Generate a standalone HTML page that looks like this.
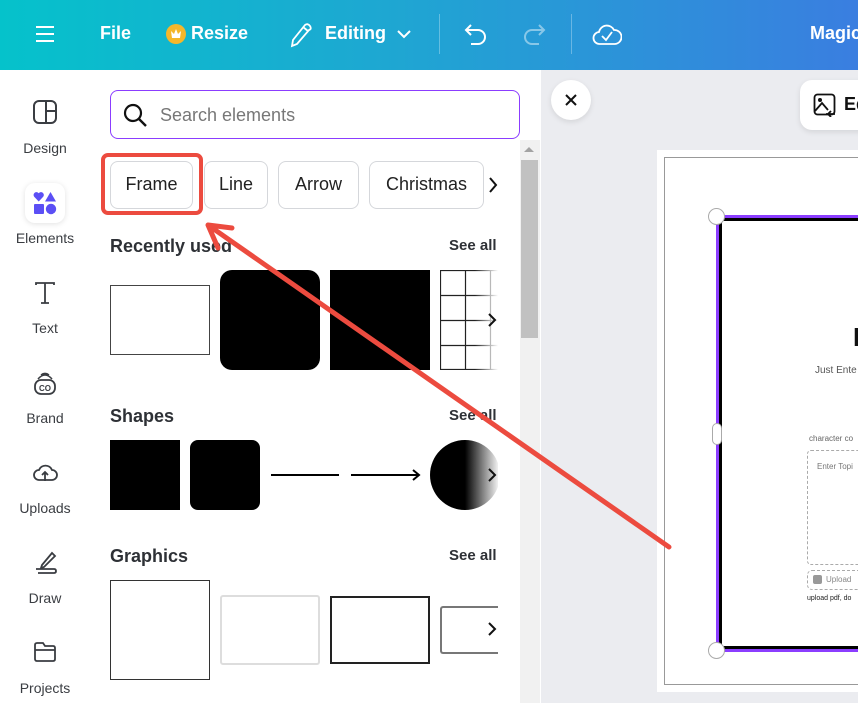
<!DOCTYPE html>
<html><head><meta charset="utf-8"><style>
*{box-sizing:border-box;margin:0;padding:0}
body{width:858px;height:703px;overflow:hidden;font-family:"Liberation Sans",sans-serif;background:#fff;position:relative}
.top{position:absolute;left:0;top:0;width:858px;height:70px;background:linear-gradient(90deg,#05c2cb 0%,#1ea7d2 45%,#3a7ee0 100%);color:#fff}
.top .t{position:absolute;top:23px;font-size:18px;font-weight:bold}
.side{position:absolute;left:0;top:0;width:90px;height:703px}
.lb{position:absolute;left:0;width:90px;text-align:center;font-size:14px;color:#3a3d42}
.ic{position:absolute;left:32px}
.search{position:absolute;left:110px;top:90px;width:410px;height:49px;border:1px solid #8b3dff;border-radius:8px}
.chip{position:absolute;top:161px;height:48px;border:1px solid #d5d7db;border-radius:8px;font-size:18px;color:#222;text-align:center;line-height:46px}
.h{position:absolute;left:110px;font-size:18px;font-weight:bold;color:#2e3136}
.sa{position:absolute;left:449px;font-size:15px;font-weight:bold;color:#2e3136}
.abs{position:absolute}
.canvas{position:absolute;left:541px;top:70px;width:317px;height:633px;background:#ebecf0}
</style></head><body>
<div class="top">
<svg class="abs" style="left:35px;top:24px" width="20" height="20"><path d="M1 3h18M1 10h18M1 17h18" stroke="#fff" stroke-width="2"/></svg>
<div class="t" style="left:100px">File</div>
<div class="abs" style="left:166px;top:24px;width:20px;height:20px;border-radius:50%;background:#f5b72a"></div>
<svg class="abs" style="left:170px;top:28px" width="12" height="11"><path d="M1 3l3 3 2-5 2 5 3-3-1 7H2z" fill="#fff"/></svg>
<div class="t" style="left:191px">Resize</div>
<svg class="abs" style="left:288px;top:22px" width="24" height="26"><path d="M4 24l1-6L17 3q3-2 5 1t-1 4L9 22z M15 5l5 4" fill="none" stroke="#fff" stroke-width="1.8"/></svg>
<div class="t" style="left:325px">Editing</div>
<svg class="abs" style="left:396px;top:29px" width="16" height="10"><path d="M2 2l6 6 6-6" fill="none" stroke="#fff" stroke-width="2"/></svg>
<div class="abs" style="left:439px;top:14px;width:1px;height:40px;background:rgba(255,255,255,.3)"></div>
<svg class="abs" style="left:463px;top:22px" width="26" height="24"><path d="M8 3L3 8l5 5M3 8h12a7 7 0 0 1 0 14H8" fill="none" stroke="#fff" stroke-width="2"/></svg>
<svg class="abs" style="left:521px;top:22px" width="26" height="24"><path d="M18 3l5 5-5 5M23 8H11a7 7 0 0 0 0 14h7" fill="none" stroke="rgba(255,255,255,.45)" stroke-width="2"/></svg>
<div class="abs" style="left:571px;top:14px;width:1px;height:40px;background:rgba(255,255,255,.3)"></div>
<svg class="abs" style="left:592px;top:20px" width="30" height="28"><path d="M8 24a6 6 0 0 1-1-12 8 8 0 0 1 15-2 7 7 0 0 1 1 14z M10 16l4 4 6-8" fill="none" stroke="#fff" stroke-width="1.8"/></svg>
<div class="t" style="left:810px">Magic</div>
</div>
<div class="side">
<svg class="ic" style="top:99px" width="26" height="26"><rect x="2" y="2" width="22" height="22" rx="5" fill="none" stroke="#3a3d42" stroke-width="2"/><path d="M14 2v22M14 12h10" stroke="#3a3d42" stroke-width="2"/></svg>
<div class="lb" style="top:140px">Design</div>
<div class="abs" style="left:25px;top:183px;width:40px;height:40px;border-radius:10px;background:#fff;box-shadow:0 1px 6px rgba(0,0,0,.12)"></div>
<svg class="abs" style="left:33px;top:191px" width="24" height="24"><path d="M5.7 10.5 L1.2 5.8 A2.8 2.8 0 0 1 5.7 2.2 A2.8 2.8 0 0 1 10.2 5.8z" fill="#5b4ff5"/><path d="M17.5 1l5.5 9.5h-11z" fill="#5b4ff5"/><rect x="1" y="13" width="10" height="10" rx="1" fill="#5b4ff5"/><circle cx="18" cy="18" r="5.2" fill="#5b4ff5"/></svg>
<div class="lb" style="top:230px">Elements</div>
<svg class="ic" style="top:280px" width="26" height="26"><path d="M4 5V3h18v2M13 3v20M9 23h8" fill="none" stroke="#3a3d42" stroke-width="1.8"/></svg>
<div class="lb" style="top:320px">Text</div>
<svg class="ic" style="top:370px" width="26" height="26"><rect x="3" y="10" width="20" height="14" rx="6" fill="none" stroke="#3a3d42" stroke-width="1.8"/><path d="M6 9q7-8 14 0M9 5q4-3 8 0" fill="none" stroke="#3a3d42" stroke-width="1.6"/><text x="13" y="21" font-size="8" font-weight="bold" text-anchor="middle" fill="#3a3d42" font-family="Liberation Sans">CO</text></svg>
<div class="lb" style="top:410px">Brand</div>
<svg class="ic" style="top:459px" width="26" height="26"><path d="M7 21a5 5 0 0 1 0-10 7 7 0 0 1 13 0 5 5 0 0 1 0 10z M13 22v-8M10 16l3-3 3 3" fill="none" stroke="#3a3d42" stroke-width="1.8"/></svg>
<div class="lb" style="top:500px">Uploads</div>
<svg class="ic" style="top:549px" width="26" height="26"><path d="M10 16l10-12 3 3-11 11-3 1z M4 20h18q2 0 2 2t-2 2H6" fill="none" stroke="#3a3d42" stroke-width="1.8"/></svg>
<div class="lb" style="top:590px">Draw</div>
<svg class="ic" style="top:639px" width="26" height="26"><path d="M3 6q0-2 2-2h6l2 3h8q2 0 2 2v11q0 2-2 2H5q-2 0-2-2z M3 11h20" fill="none" stroke="#3a3d42" stroke-width="1.8"/></svg>
<div class="lb" style="top:680px">Projects</div>
</div>
<div class="search"><svg class="abs" style="left:12px;top:12px" width="26" height="26"><circle cx="10" cy="10" r="8" fill="none" stroke="#111" stroke-width="2.2"/><path d="M16 16l7 7" stroke="#111" stroke-width="2.4"/></svg><div class="abs" style="left:49px;top:14px;font-size:18px;color:#777">Search elements</div></div>
<div class="chip" style="left:110px;width:83px;line-height:44px">Frame</div>
<div class="chip" style="left:204px;width:64px;line-height:44px">Line</div>
<div class="chip" style="left:278px;width:81px;line-height:44px">Arrow</div>
<div class="chip" style="left:369px;width:115px;line-height:44px">Christmas</div>
<svg class="abs" style="left:487px;top:176px" width="12" height="18"><path d="M3 2l6 7-6 7" fill="none" stroke="#111" stroke-width="2"/></svg>
<div class="abs" style="left:101px;top:153px;width:102px;height:62px;border:4px solid #ec4b3f;border-radius:7px"></div>
<div class="h" style="top:236px">Recently used</div><div class="sa" style="top:237px">See all</div>
<div class="abs" style="left:110px;top:285px;width:100px;height:70px;border:1px solid #444"></div>
<div class="abs" style="left:220px;top:270px;width:100px;height:100px;border-radius:12px;background:#000"></div>
<div class="abs" style="left:330px;top:270px;width:100px;height:100px;background:#000"></div>
<svg class="abs" style="left:440px;top:270px" width="58" height="100"><defs><linearGradient id="g" x1="0" x2="1"><stop offset=".6" stop-color="#fff" stop-opacity="0"/><stop offset="1" stop-color="#fff"/></linearGradient></defs><path d="M.5 0v100M25.5 0v100M50.5 0v100M0 .5h58M0 25.5h58M0 50.5h58M0 75.5h58M0 99.5h58" stroke="#222" stroke-width="1.2"/><rect width="58" height="100" fill="url(#g)"/><path d="M49 44l6 6-6 6" fill="none" stroke="#111" stroke-width="2"/></svg>
<div class="h" style="top:406px">Shapes</div><div class="sa" style="top:407px">See all</div>
<div class="abs" style="left:110px;top:440px;width:70px;height:70px;background:#000"></div>
<div class="abs" style="left:190px;top:440px;width:70px;height:70px;border-radius:8px;background:#000"></div>
<div class="abs" style="left:271px;top:474px;width:68px;height:2px;background:#000"></div>
<svg class="abs" style="left:350px;top:467px" width="72" height="16"><path d="M1 8h68M63 3l6 5-6 5" fill="none" stroke="#000" stroke-width="2"/></svg>
<svg class="abs" style="left:430px;top:440px" width="68" height="70"><defs><linearGradient id="c" x1="0" x2="1"><stop offset=".5" stop-color="#000"/><stop offset="1" stop-color="#fff"/></linearGradient></defs><circle cx="35" cy="35" r="35" fill="url(#c)"/><path d="M59 29l6 6-6 6" fill="none" stroke="#111" stroke-width="2"/></svg>
<div class="h" style="top:546px">Graphics</div><div class="sa" style="top:547px">See all</div>
<div class="abs" style="left:110px;top:580px;width:100px;height:100px;border:1px solid #333"></div>
<div class="abs" style="left:220px;top:595px;width:100px;height:70px;border:2px solid #ddd;border-radius:3px"></div>
<div class="abs" style="left:330px;top:596px;width:100px;height:68px;border:2px solid #222"></div>
<div class="abs" style="left:440px;top:606px;width:58px;height:48px;border:2px solid #777;border-right:none;border-radius:3px 0 0 3px"></div>
<svg class="abs" style="left:486px;top:621px" width="12" height="16"><path d="M3 2l6 6-6 6" fill="none" stroke="#111" stroke-width="2"/></svg>
<div class="abs" style="left:520px;top:140px;width:20px;height:563px;background:#f1f1f1"></div>
<div class="abs" style="left:521px;top:160px;width:17px;height:178px;background:#c1c1c1"></div>
<svg class="abs" style="left:524px;top:146px" width="10" height="6"><path d="M0 6l5-5 5 5z" fill="#a3a3a3"/></svg>
<div class="canvas"></div>
<div class="abs" style="left:551px;top:80px;width:40px;height:40px;border-radius:50%;background:#fff;box-shadow:0 2px 6px rgba(0,0,0,.1)"></div>
<svg class="abs" style="left:564px;top:93px" width="14" height="14"><path d="M2 2l10 10M12 2L2 12" stroke="#111" stroke-width="2"/></svg>
<div class="abs" style="left:800px;top:80px;width:80px;height:50px;border-radius:12px;background:#fff;box-shadow:0 2px 6px rgba(0,0,0,.1)"></div>
<svg class="abs" style="left:813px;top:93px" width="24" height="24"><rect x="1.5" y="1.5" width="20" height="20" rx="3" fill="none" stroke="#111" stroke-width="1.8"/><circle cx="7" cy="7" r="2" fill="#111"/><path d="M2 18l7-8 6 7M13 21h9M18 18l-3 3 3 3" fill="none" stroke="#111" stroke-width="1.8"/></svg>
<div class="abs" style="left:844px;top:94px;font-size:18px;font-weight:bold;color:#111">Ed</div>
<div class="abs" style="left:657px;top:150px;width:201px;height:542px;background:#fff"></div>
<div class="abs" style="left:664px;top:157px;width:200px;height:528px;border:1px solid #999"></div>
<div class="abs" style="left:716px;top:215px;width:150px;height:437px;border:3px solid #8b3dff"></div>
<div class="abs" style="left:719px;top:218px;width:150px;height:431px;border:3px solid #000"></div>
<div class="abs" style="left:853px;top:322px;font-size:26px;font-weight:bold;color:#111">P</div>
<div class="abs" style="left:815px;top:365px;font-size:10px;color:#555">Just Ente</div>
<div class="abs" style="left:809px;top:434px;font-size:8px;color:#666">character co</div>
<div class="abs" style="left:807px;top:450px;width:60px;height:115px;border:1px dashed #aaa;border-radius:4px"></div>
<div class="abs" style="left:817px;top:462px;font-size:8px;color:#777">Enter Topi</div>
<div class="abs" style="left:807px;top:570px;width:60px;height:20px;border:1px dashed #aaa;border-radius:5px"></div>
<div class="abs" style="left:813px;top:575px;width:9px;height:9px;background:#999;border-radius:2px"></div>
<div class="abs" style="left:826px;top:575px;font-size:8px;color:#888">Upload</div>
<div class="abs" style="left:807px;top:595px;font-size:7px;color:#222">upload pdf, do</div>
<div class="abs" style="left:708px;top:208px;width:17px;height:17px;border-radius:50%;background:#fff;border:1px solid #aaa"></div>
<div class="abs" style="left:708px;top:642px;width:17px;height:17px;border-radius:50%;background:#fff;border:1px solid #aaa"></div>
<div class="abs" style="left:712px;top:423px;width:10px;height:22px;border-radius:5px;background:#fff;border:1px solid #aaa"></div>
<svg class="abs" style="left:0;top:0" width="858" height="703"><path d="M669 547L208 225M208 225L232 228M208 225L218 248" fill="none" stroke="#ec4b3f" stroke-width="5" stroke-linecap="round"/></svg>
</body></html>
